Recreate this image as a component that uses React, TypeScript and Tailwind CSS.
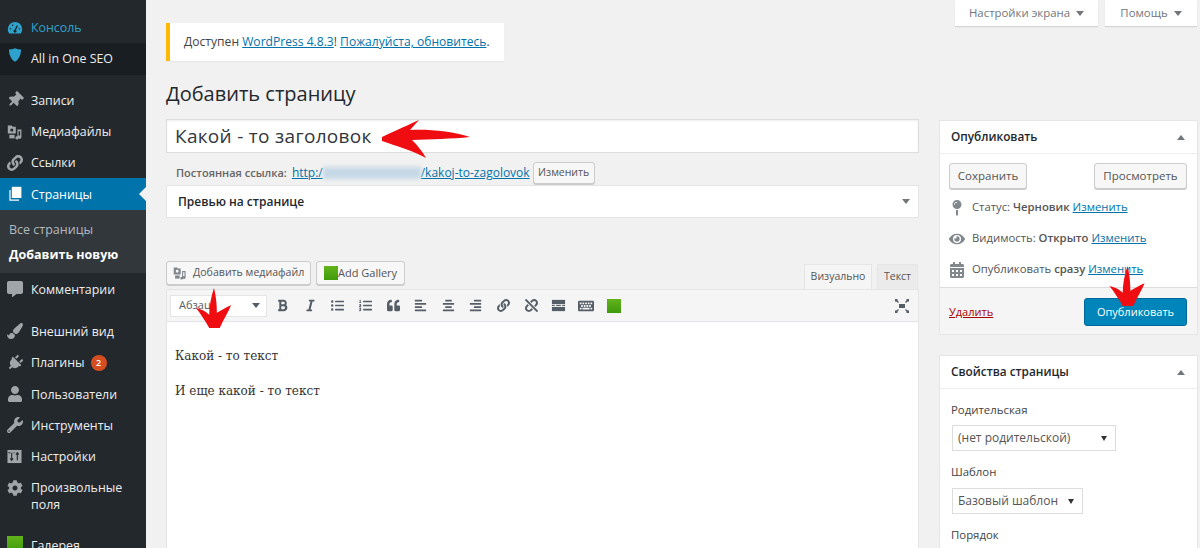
import type { ReactNode } from "react";
import {
  FaAlignCenter,
  FaAlignLeft,
  FaAlignRight,
  FaBold,
  FaCalendarAlt,
  FaCog,
  FaCommentAlt,
  FaEye,
  FaItalic,
  FaKeyboard,
  FaLink,
  FaListOl,
  FaListUl,
  FaMapPin,
  FaPaintBrush,
  FaPlug,
  FaQuoteLeft,
  FaThumbtack,
  FaUnlink,
  FaUser,
  FaWrench,
} from "react-icons/fa";

function GaugeIcon() {
  return (
    <svg viewBox="0 0 20 20" className="w-4 h-4 text-[#2ea2cc]" fill="currentColor">
      <path d="M10 2.500A9 9 0 0 0 1 11.500c0 2.200.8 4.100 2 5.500h14a9 9 0 0 0 2-5.500 9 9 0 0 0-9-9z" />
      <path d="M10 13l3-6" stroke="#23282d" strokeWidth="1.600" />
      <circle cx="10" cy="14" r="1.800" fill="#23282d" />
      <circle cx="4.500" cy="11" r="1" fill="#23282d" />
      <circle cx="15.500" cy="11" r="1" fill="#23282d" />
      <circle cx="7" cy="6.500" r="1" fill="#23282d" />
    </svg>
  );
}

function ShieldIcon() {
  return (
    <svg viewBox="0 0 20 20" className="w-4 h-4 -mt-2" fill="#2ea2cc">
      <path d="M10 1.500c2.500 1.200 5 1.700 7.500 1.700 0 6.500-2.200 12-7.500 15.300C4.700 15.200 2.500 9.700 2.500 3.200 5 3.200 7.500 2.700 10 1.500z" />
    </svg>
  );
}

function MediaIcon({ className }: { className: string }) {
  return (
    <svg viewBox="0 0 20 20" className={className} fill="currentColor">
      <path d="M1 2h5l1 1.500h4V12H1V2zm5 3.500a2 2 0 1 0 0 4 2 2 0 0 0 0-4z" />
      <path d="M13 7h5v9.500a2 2 0 1 1-1.600-2V9h-1.900v8.500a2 2 0 1 1-1.500-2V7z" />
      <path d="M3 13.500h6.500V18H3z" />
    </svg>
  );
}

function PagesIcon() {
  return (
    <svg viewBox="0 0 20 20" className="w-4 h-4 text-white" fill="currentColor">
      <path d="M6 1h12v14H6z" />
      <path d="M3 5h1.500v12H15v1.500H3z" />
    </svg>
  );
}

function SettingsIcon() {
  return (
    <svg viewBox="0 0 16 16" className="w-[15px] h-[15px]">
      <rect x="0.500" y="1" width="15" height="14" fill="#a0a5aa" />
      <path d="M5 4v8M3.500 10L5 12l1.500-2M11 12V4M9.500 6L11 4l1.500 2M1.500 4h2M7 4h1" fill="none" stroke="#23282d" strokeWidth="1.200" />
    </svg>
  );
}

function GreenSquare({ className }: { className: string }) {
  return <span className={`inline-block bg-gradient-to-b from-[#62b31a] to-[#3f9a0c] ${className}`} />;
}

function MoreIcon() {
  return (
    <svg viewBox="0 0 16 16" className="w-[15px] h-[15px]" fill="#555d66">
      <rect x="1" y="2" width="14" height="4.500" />
      <rect x="1" y="7.300" width="3" height="1.200" />
      <rect x="5.500" y="7.300" width="5" height="1.200" />
      <rect x="12" y="7.300" width="3" height="1.200" />
      <rect x="1" y="9.500" width="14" height="4.500" />
    </svg>
  );
}

function FullscreenIcon() {
  return (
    <svg viewBox="0 0 16 16" className="w-4 h-4" fill="none" stroke="#555d66" strokeWidth="1.300">
      <rect x="5" y="6" width="6" height="4" fill="#555d66" stroke="none" />
      <path d="M1.500 1.500l3 3M14.500 1.500l-3 3M1.500 14.500l3-3M14.500 14.500l-3-3" />
      <path d="M1 1h2.500v2.500H1zM12.500 1H15v2.500h-2.500zM1 12.500h2.500V15H1zM12.500 12.500H15V15h-2.500z" fill="#555d66" stroke="none" />
    </svg>
  );
}

// hand-drawn red arrows laid over the screenshot
function ArrowLeft() {
  return (
    <svg viewBox="0 0 90 40" className="absolute left-[382px] top-[119px] w-[90px] h-[40px]" fill="#f00d12">
      <path d="M0 18C8 14 20 9 37 1l-9 10c18-1 42 1 60 7-18 2-40 2-58 3 6 6 10 11 14 18C30 31 14 27 0 22z" />
    </svg>
  );
}

function ArrowDown({ className }: { className: string }) {
  return (
    <svg viewBox="0 0 40 42" className={className} fill="#f00d12">
      <path d="M20 0c2 8 3 16 3 26 5-3 10-6 15-8-3 7-8 15-12 24h-11C11 35 6 27 1 21c5 1 10 3 14 7 0-9 2-19 5-28z" />
    </svg>
  );
}

function MenuItem({ icon, label, active, seo, badge }: {
  icon: ReactNode;
  label: ReactNode;
  active?: boolean;
  seo?: boolean;
  badge?: string;
}) {
  return (
    <div
      className={`relative flex items-center shrink-0 pl-[7px] text-[12.400px] ${
        active ? "bg-[#0073aa] text-white h-[32px]" : seo ? "bg-[#191e23] text-[#eee] h-[31.300px]" : "text-[#eee] h-[31.300px]"
      }`}
    >
      <span className="w-[24px] flex justify-start text-[#a0a5aa] text-[16px] shrink-0">{icon}</span>
      <span className="leading-[17px]">{label}</span>
      {badge && (
        <span className="ml-[6px] w-4 h-4 rounded-full bg-[#d54e21] text-white text-[9px] font-semibold flex items-center justify-center">
          {badge}
        </span>
      )}
      {active && (
        <span className="absolute right-0 top-[9px] border-y-[7px] border-y-transparent border-r-[7px] border-r-[#f1f1f1]" />
      )}
    </div>
  );
}

function Sidebar() {
  return (
    <aside className="w-[146px] shrink-0 bg-[#23282d] flex flex-col pt-[12px] overflow-hidden">
      <MenuItem icon={<GaugeIcon />} label={<span className="text-[#2ea2cc]">Консоль</span>} />
      <MenuItem icon={<ShieldIcon />} label="All in One SEO" seo />
      <div className="h-[10px] shrink-0" />
      <MenuItem icon={<FaThumbtack className="rotate-45" />} label="Записи" />
      <MenuItem icon={<MediaIcon className="w-4 h-4" />} label="Медиафайлы" />
      <MenuItem icon={<FaLink />} label="Ссылки" />
      <MenuItem icon={<PagesIcon />} label="Страницы" active />
      <div className="bg-[#32373c] h-[63px] shrink-0 pl-[9px] pt-[11px] text-[12.500px] flex flex-col gap-[7px] leading-[18px]">
        <span className="text-[#b4b9be]">Все страницы</span>
        <span className="text-white font-bold">Добавить новую</span>
      </div>
      <MenuItem icon={<FaCommentAlt />} label="Комментарии" />
      <div className="h-[11px] shrink-0" />
      <MenuItem icon={<FaPaintBrush />} label="Внешний вид" />
      <MenuItem icon={<FaPlug className="rotate-45" />} label="Плагины" badge="2" />
      <MenuItem icon={<FaUser />} label="Пользователи" />
      <MenuItem icon={<FaWrench />} label="Инструменты" />
      <MenuItem icon={<SettingsIcon />} label="Настройки" />
      <div className="flex pl-[7px] pt-[7px] text-[12.400px] text-[#eee] leading-[17px] h-[48px] shrink-0">
        <span className="w-[24px] text-[#a0a5aa] text-[16px] pt-[1px]"><FaCog /></span>
        <span>Произвольные<br />поля</span>
      </div>
      <div className="h-[11px] shrink-0" />
      <div className="flex items-center pl-[7px] text-[12.400px] text-[#eee] h-[31px] shrink-0">
        <span className="w-[24px] shrink-0"><GreenSquare className="w-4 h-4 block" /></span>
        <span>Галерея</span>
      </div>
    </aside>
  );
}

function TopTab({ label, className }: { label: string; className: string }) {
  return (
    <div className={`h-[26px] bg-white shadow-[0_1px_1px_rgba(0,0,0,0.12)] flex items-center justify-center gap-[6px] text-[11.400px] text-[#72777c] ${className}`}>
      {label}
      <span className="border-x-[4px] border-x-transparent border-t-[5px] border-t-[#72777c]" />
    </div>
  );
}

function ToolCell({ children }: { children: ReactNode }) {
  return <span className="w-[27.600px] flex justify-center shrink-0">{children}</span>;
}

function Toolbar() {
  const icon = "w-[13px] h-[13px]";
  return (
    <div className="h-[32px] bg-[#f5f5f5] border-b border-[#e2e4e7] flex items-center pl-[3px] text-[#555d66]">
      <div className="w-[97px] h-[22px] bg-white border border-[#e5e5e5] flex items-center justify-between pl-2 pr-[6px] text-[11px] text-[#555d66]">
        Абзац
        <span className="border-x-[4px] border-x-transparent border-t-[5px] border-t-[#555d66]" />
      </div>
      <div className="flex items-center ml-[2px]">
        <ToolCell><FaBold className={icon} /></ToolCell>
        <ToolCell><FaItalic className={icon} /></ToolCell>
        <ToolCell><FaListUl className={icon} /></ToolCell>
        <ToolCell><FaListOl className={icon} /></ToolCell>
        <ToolCell><FaQuoteLeft className={icon} /></ToolCell>
        <ToolCell><FaAlignLeft className={icon} /></ToolCell>
        <ToolCell><FaAlignCenter className={icon} /></ToolCell>
        <ToolCell><FaAlignRight className={icon} /></ToolCell>
        <ToolCell><FaLink className={icon} /></ToolCell>
        <ToolCell><FaUnlink className={icon} /></ToolCell>
        <ToolCell><MoreIcon /></ToolCell>
        <ToolCell><FaKeyboard className="w-4 h-4" /></ToolCell>
        <ToolCell><GreenSquare className="w-[14px] h-[14px]" /></ToolCell>
      </div>
      <div className="ml-auto mr-[8px]"><FullscreenIcon /></div>
    </div>
  );
}

function EditorColumn() {
  const btn = "h-[24px] flex items-center bg-[#f7f7f7] border border-[#ccc] rounded-[3px] shadow-[0_1px_0_#ccc] text-[#555]";
  return (
    <div className="w-[753px] shrink-0">
      <h1 className="mt-[19px] text-[20px] leading-[28px] text-[#23282d]">Добавить страницу</h1>
      <div className="mt-[11px] h-[34px] bg-white border border-[#ddd] shadow-[inset_0_1px_2px_rgba(0,0,0,0.07)] flex items-center pl-2 text-[19px] tracking-[0.3px] text-[#32373c]">
        Какой - то заголовок
      </div>
      <div className="mt-[8px] h-[24px] flex items-center pl-[10px] text-[12px] text-[#666]">
        <span className="font-semibold text-[11px]">Постоянная ссылка:</span>
        <a className="ml-[5px] text-[#0073aa] underline">http:/</a>
        <span className="w-[98px] h-[12px] bg-[#c5d8e6] blur-[2px]" />
        <a className="text-[#0073aa] underline">/kakoj-to-zagolovok</a>
        <span className="ml-[3px] h-[22px] w-[62px] justify-center bg-[#f7f7f7] border border-[#ccc] rounded-[3px] shadow-[0_1px_0_#ccc] flex items-center text-[10.500px] text-[#555]">Изменить</span>
      </div>
      <div className="h-[33px] bg-white border border-[#e5e5e5] flex items-center justify-between pl-[11px] pr-[8px] text-[12px] font-semibold text-[#23282d]">
        Превью на странице
        <span className="border-x-[4px] border-x-transparent border-t-[5px] border-t-[#72777c]" />
      </div>
      <div className="mt-[43px] h-[28px] flex items-start justify-between">
        <div className="flex gap-[5px]">
          <div className={`${btn} w-[145px] pl-[6px] gap-[6px] text-[10.600px]`}>
            <MediaIcon className="w-[14px] h-[14px] text-[#82878c]" />
            Добавить медиафайл
          </div>
          <div className={`${btn} w-[89px] pl-[7px] text-[11px]`}>
            <GreenSquare className="w-[14px] h-[14px]" />
            Add Gallery
          </div>
        </div>
        <div className="flex items-end h-[28px] text-[10.500px] text-[#555] mr-[1px]">
          <div className="h-[25px] w-[68px] justify-center bg-[#f5f5f5] border border-b-0 border-[#e5e5e5] flex items-center">Визуально</div>
          <div className="ml-[5px] h-[25px] w-[41px] justify-center bg-[#ebebeb] border border-b-0 border-[#e5e5e5] flex items-center">Текст</div>
        </div>
      </div>
      <div className="border border-[#e5e5e5] bg-white h-[300px]">
        <Toolbar />
        <div className="pl-2 pt-[24px] font-['DejaVu_Serif',serif] text-[12px] leading-[20px] text-[#333]">
          <p>Какой - то текст</p>
          <p className="mt-[15px]">И еще какой - то текст</p>
        </div>
      </div>
    </div>
  );
}

function BoxHeader({ title }: { title: string }) {
  return (
    <div className="h-[33px] border-b border-[#eee] flex items-center justify-between pl-[11px] pr-[12px] text-[11.800px] font-semibold text-[#23282d]">
      {title}
      <span className="border-x-[4px] border-x-transparent border-b-[5px] border-b-[#72777c]" />
    </div>
  );
}

function StatusRow({ icon, children }: { icon: ReactNode; children: ReactNode }) {
  return (
    <div className="h-[31px] flex items-center pl-[9px] text-[11.300px] text-[#555]">
      <span className="w-[23px] shrink-0 text-[#82878c] text-[16px]">{icon}</span>
      <span className="whitespace-nowrap">{children}</span>
    </div>
  );
}

function SideColumn() {
  const change = <a className="text-[#0073aa] underline">Изменить</a>;
  const btn = "h-[26px] flex items-center justify-center bg-[#f7f7f7] border border-[#ccc] rounded-[3px] shadow-[0_1px_0_#ccc] text-[11.500px] text-[#555]";
  return (
    <div className="w-[259px] shrink-0 ml-[20px] pt-[120px]">
      <div className="bg-white border border-[#e5e5e5]">
        <BoxHeader title="Опубликовать" />
        <div className="flex justify-between pl-[9px] pr-[10px] pt-[9px]">
          <div className={`${btn} w-[78px]`}>Сохранить</div>
          <div className={`${btn} w-[93px]`}>Просмотреть</div>
        </div>
        <div className="pt-[3px] pb-[2px]">
          <StatusRow icon={<FaMapPin />}>Статус: <b className="font-semibold">Черновик</b> {change}</StatusRow>
          <StatusRow icon={<FaEye />}>Видимость: <b className="font-semibold">Открыто</b> {change}</StatusRow>
          <StatusRow icon={<FaCalendarAlt />}>Опубликовать <b className="font-semibold">сразу</b> {change}</StatusRow>
        </div>
        <div className="h-[47px] pt-[2px] bg-[#f5f5f5] border-t border-[#ddd] flex items-center justify-between pl-[9px] pr-[10px] text-[11px]">
          <a className="text-[#a00] underline">Удалить</a>
          <div className="w-[103px] h-[28px] rounded-[3px] bg-[#0085ba] border border-[#006799] flex items-center justify-center text-white">Опубликовать</div>
        </div>
      </div>
      <div className="mt-[20px] bg-white border border-[#e5e5e5] h-[200px]">
        <BoxHeader title="Свойства страницы" />
        <div className="pl-[11px] text-[11.400px] text-[#444]">
          <div className="mt-[12px] leading-[18px]">Родительская</div>
          <div className="mt-[6px] ml-[1px] w-[164px] h-[26px] border border-[#ddd] flex items-center justify-between pl-[5px] pr-[8px] text-[12px] text-[#555]">
            (нет родительской)
            <span className="border-x-[3px] border-x-transparent border-t-[5px] border-t-[#333]" />
          </div>
          <div className="mt-[12px] leading-[18px]">Шаблон</div>
          <div className="mt-[7px] ml-[1px] w-[131px] h-[26px] border border-[#ddd] flex items-center justify-between pl-[5px] pr-[8px] text-[12px] text-[#555]">
            Базовый шаблон
            <span className="border-x-[3px] border-x-transparent border-t-[5px] border-t-[#333]" />
          </div>
          <div className="mt-[12px] leading-[18px]">Порядок</div>
        </div>
      </div>
    </div>
  );
}

export default function App() {
  return (
    <div className="relative w-[1200px] h-[548px] overflow-hidden flex bg-[#f1f1f1] font-['Open_Sans',sans-serif]">
      <Sidebar />
      <main className="flex-1 min-w-0 pl-[20px]">
        <div className="flex justify-end gap-[7px] pr-[3px]">
          <TopTab label="Настройки экрана" className="w-[143px]" />
          <TopTab label="Помощь" className="w-[92px]" />
        </div>
        <div className="flex items-start -mt-[26px]">
          <div>
            <div className="mt-[23px] w-[338px] h-[38px] bg-white border-l-4 border-[#ffb900] shadow-[0_1px_1px_rgba(0,0,0,0.04)] flex items-center pl-[14px] text-[12.100px] text-[#444]">
              <span>Доступен <a className="text-[#0073aa] underline">WordPress 4.8.3</a>! <a className="text-[#0073aa] underline">Пожалуйста, обновитесь</a>.</span>
            </div>
            <EditorColumn />
          </div>
          <SideColumn />
        </div>
      </main>
      <ArrowLeft />
      <ArrowDown className="absolute left-[194px] top-[288px] w-[40px] h-[40px]" />
      <ArrowDown className="absolute left-[1108px] top-[266px] w-[39px] h-[40px]" />
    </div>
  );
}
